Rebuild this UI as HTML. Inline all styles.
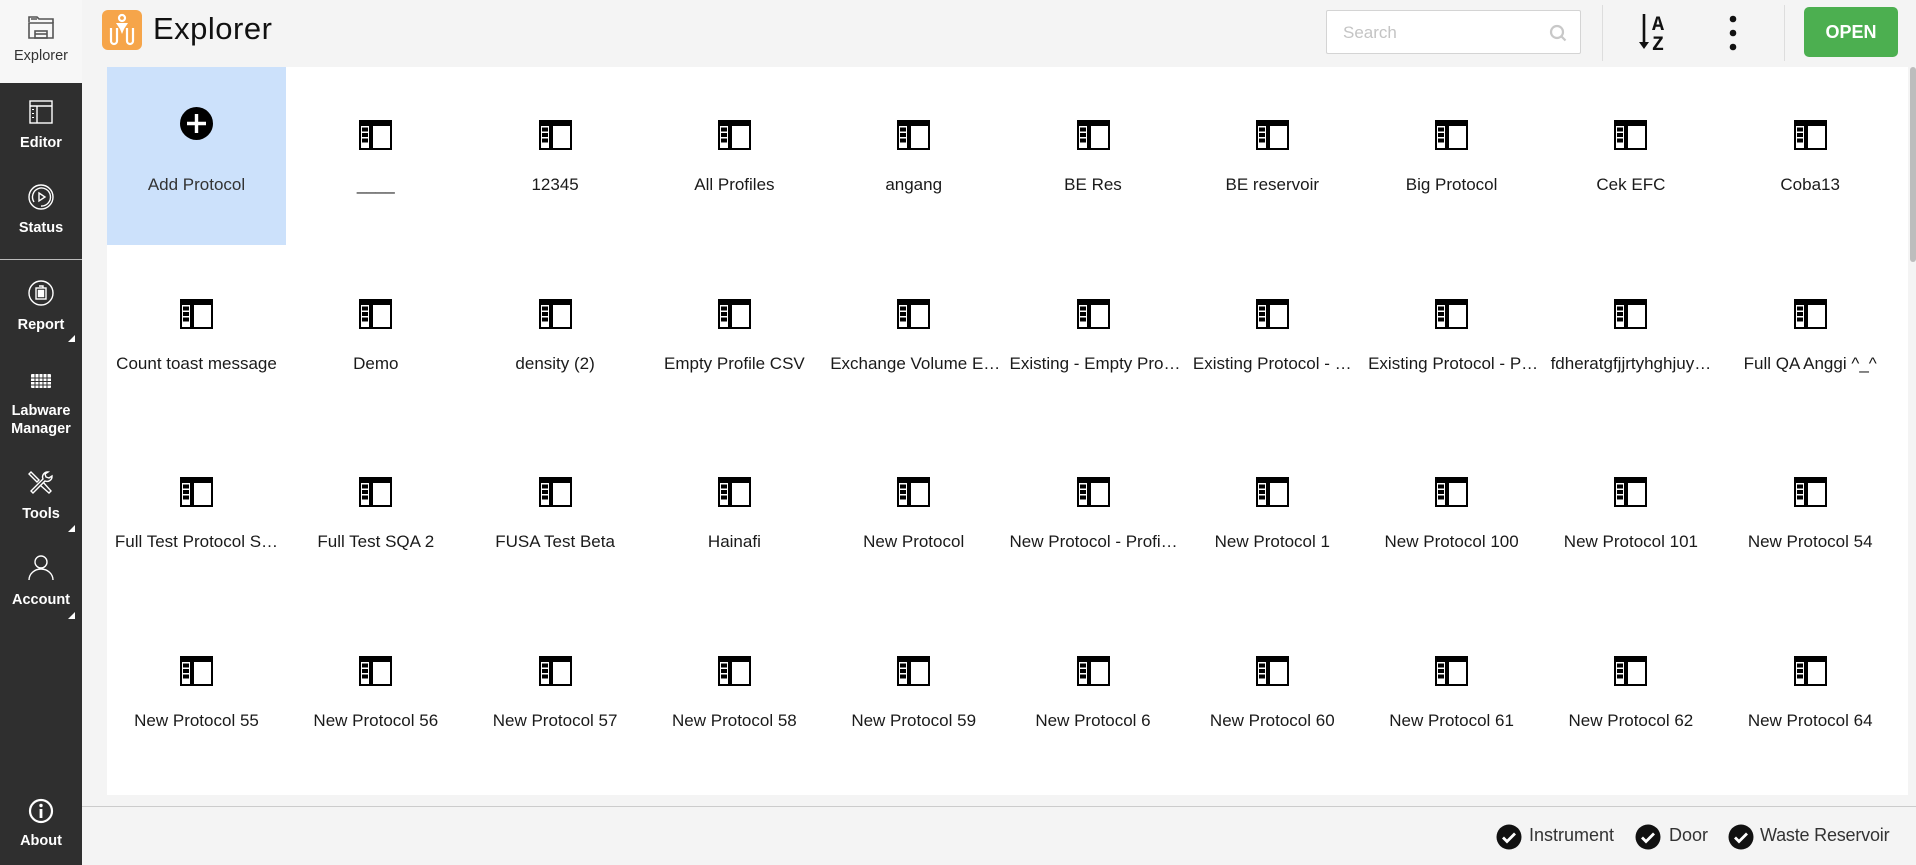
<!DOCTYPE html>
<html><head><meta charset="utf-8"><style>
*{box-sizing:border-box;margin:0;padding:0}
body{width:1916px;height:865px;overflow:hidden;background:#f4f4f4;font-family:"Liberation Sans",Arial,sans-serif;position:relative}
.side{position:absolute;left:0;top:0;width:82px;height:865px;background:#2f2f2f}
.side .top{position:absolute;left:0;top:0;width:82px;height:83px;background:#f7f7f7}
.sl{position:absolute;left:0;width:82px;text-align:center;color:#fff;font-size:14.5px;line-height:18px}
.si{position:absolute;left:26px}
.tri{position:absolute;left:68px;width:0;height:0;border-left:7px solid transparent;border-bottom:7px solid #fff}
.sep{position:absolute;left:0;top:259px;width:82px;height:1px;background:#bbb}
.hdr{position:absolute;left:82px;top:0;right:0;height:67px;background:#f4f4f4}
.grid{position:absolute;left:107px;top:67px;width:1801px;height:728px;background:#fff}
.cell{position:absolute;width:179px;height:178px;text-align:center}
.cell svg{position:absolute;left:73px;top:53px}
.cell .t{position:absolute;left:0;right:0;top:108px;font-size:17px;color:#1a1a1a;white-space:nowrap;overflow:hidden;padding:0 6px}
.foot{position:absolute;left:82px;top:806px;right:0;height:59px;border-top:1px solid #ccc;background:#f4f4f4}
.fi{position:absolute;top:18px;font-size:18px;color:#333}
.ck{position:absolute;top:17px}
</style></head><body>
<div class="side">
 <div class="top"></div>
 <svg class="si" style="top:12px;left:26px" width="30" height="30" viewBox="0 0 30 30" fill="none" stroke="#555" stroke-width="1.6"><path d="M3 10V5h8l2 2h14v4"/><path d="M5 7h6M3 11h24v15H3z"/><rect x="9" y="19" width="12" height="7"/><path d="M9 22h12"/></svg>
 <div class="sl" style="top:47px;color:#333">Explorer</div>
 <svg class="si" style="top:97px" width="30" height="30" viewBox="0 0 30 30" fill="none" stroke="#fff" stroke-width="1.4"><rect x="4" y="4" width="22" height="22"/><path d="M4 9h22M11 9v17"/><path d="M7 12v1M7 16v1M7 20v1" stroke-width="2"/></svg>
 <div class="sl" style="top:134px;font-weight:bold">Editor</div>
 <svg class="si" style="top:182px" width="30" height="30" viewBox="0 0 30 30" fill="none" stroke="#fff" stroke-width="1.4"><circle cx="15" cy="15" r="12"/><path d="M8 20A9 9 0 1 1 15 24"/><path d="M13 11l6 4-6 4z"/></svg>
 <div class="sl" style="top:219px;font-weight:bold">Status</div>
 <div class="sep"></div>
 <svg class="si" style="top:278px" width="30" height="30" viewBox="0 0 30 30" fill="none" stroke="#fff" stroke-width="1.4"><circle cx="15" cy="15" r="12"/><rect x="10" y="10" width="10" height="11"/><rect x="12.5" y="12.5" width="5" height="6" fill="#fff"/><path d="M13 8h4v2"/></svg>
 <div class="sl" style="top:316px;font-weight:bold">Report</div>
 <div class="tri" style="top:335px"></div>
 <svg class="si" style="top:368px" width="30" height="26" viewBox="0 0 30 26" fill="#fff"><rect x="5" y="6" width="20" height="14" rx="1"/><g stroke="#2f2f2f" stroke-width="1"><path d="M5 10h20M5 13.5h20M5 17h20M9 6v14M13 6v14M17 6v14M21 6v14"/></g></svg>
 <div class="sl" style="top:402px;font-weight:bold;line-height:18px">Labware<br>Manager</div>
 <svg class="si" style="top:468px" width="30" height="30" viewBox="0 0 30 30" fill="none" stroke="#fff" stroke-width="1.4"><path d="M5 4l8 8-2 2-8-8zM17 14l8 9-2 2-9-8"/><path d="M22 4a5 5 0 0 0-5 7L5 23l2 2 12-12a5 5 0 0 0 7-5l-3 2-3-1-1-3z"/></svg>
 <div class="sl" style="top:505px;font-weight:bold">Tools</div>
 <div class="tri" style="top:525px"></div>
 <svg class="si" style="top:553px" width="30" height="30" viewBox="0 0 30 30" fill="none" stroke="#fff" stroke-width="1.4"><circle cx="15" cy="9" r="6"/><path d="M3 27a12 11 0 0 1 24 0"/></svg>
 <div class="sl" style="top:591px;font-weight:bold">Account</div>
 <div class="tri" style="top:612px"></div>
 <svg class="si" style="top:796px" width="30" height="30" viewBox="0 0 30 30"><circle cx="15" cy="15" r="11" fill="none" stroke="#fff" stroke-width="2.2"/><rect x="13.6" y="13" width="2.8" height="9" fill="#fff"/><circle cx="15" cy="9.5" r="1.7" fill="#fff"/></svg>
 <div class="sl" style="top:832px;font-weight:bold">About</div>
</div>
<div class="hdr">
 <svg style="position:absolute;left:20px;top:10px" width="40" height="40" viewBox="0 0 40 40"><rect width="40" height="40" rx="6" fill="#f6a54a"/><g fill="none" stroke="#fff" stroke-width="2.2"><path d="M9 18v13a3 3 0 0 0 6 0V18M25 18v13a3 3 0 0 0 6 0V18"/><circle cx="20" cy="8" r="3"/></g><path d="M14 13h12l-4 6h-4z" fill="#fff"/><path d="M18 19h4l-2 5z" fill="#fff"/></svg>
 <div style="position:absolute;left:71px;top:11px;font-size:31px;color:#111;letter-spacing:0.5px">Explorer</div>
 <div style="position:absolute;left:1244px;top:10px;width:255px;height:44px;background:#fff;border:1px solid #d4d4d4;border-radius:2px"><span style="position:absolute;left:16px;top:12px;font-size:17px;color:#c4c4c4">Search</span><svg style="position:absolute;left:222px;top:13px" width="18" height="18" viewBox="0 0 18 18" fill="none" stroke="#c8c8c8" stroke-width="2.2"><circle cx="8" cy="8" r="6"/><path d="M12.5 12.5l4 4"/></svg></div>
 <div style="position:absolute;left:1520px;top:5px;width:1px;height:56px;background:#ddd"></div>
 <svg style="position:absolute;left:1556px;top:12px" width="34" height="40" viewBox="0 0 34 40"><path d="M6 2v32" stroke="#111" stroke-width="2.6"/><path d="M1 30l5 7 5-7z" fill="#111"/><text x="14" y="18" font-family="Liberation Mono,monospace" font-size="20" font-weight="bold" fill="#111">A</text><text x="14" y="38" font-family="Liberation Mono,monospace" font-size="20" font-weight="bold" fill="#111">Z</text></svg>
 <svg style="position:absolute;left:1645px;top:15px" width="12" height="36" viewBox="0 0 12 36" fill="#111"><circle cx="6" cy="4" r="3.3"/><circle cx="6" cy="18" r="3.3"/><circle cx="6" cy="32" r="3.3"/></svg>
 <div style="position:absolute;left:1702px;top:5px;width:1px;height:56px;background:#ddd"></div>
 <div style="position:absolute;left:1722px;top:7px;width:94px;height:50px;background:#4caf50;border-radius:5px;color:#fff;font-size:18px;font-weight:bold;text-align:center;line-height:50px">OPEN</div>
</div>
<div style="position:absolute;left:1908px;top:67px;width:8px;height:739px;background:#f4f4f4"></div>
<div style="position:absolute;left:1910px;top:67px;width:6px;height:195px;background:#bdbdbd;border-radius:3px"></div>
<div class="grid" id="g"></div>
<div class="foot">
 <svg class="ck" style="left:1414px" width="26" height="26" viewBox="0 0 26 26"><circle cx="13" cy="13" r="12.5" fill="#111"/><path d="M7 13.5l4 4 8-8" fill="none" stroke="#fff" stroke-width="2.8"/></svg>
 <div class="fi" style="left:1447px">Instrument</div>
 <svg class="ck" style="left:1553px" width="26" height="26" viewBox="0 0 26 26"><circle cx="13" cy="13" r="12.5" fill="#111"/><path d="M7 13.5l4 4 8-8" fill="none" stroke="#fff" stroke-width="2.8"/></svg>
 <div class="fi" style="left:1587px">Door</div>
 <svg class="ck" style="left:1646px" width="26" height="26" viewBox="0 0 26 26"><circle cx="13" cy="13" r="12.5" fill="#111"/><path d="M7 13.5l4 4 8-8" fill="none" stroke="#fff" stroke-width="2.8"/></svg>
 <div class="fi" style="left:1678px;letter-spacing:-0.2px">Waste Reservoir</div>
</div>
<script>
var L=["Add Protocol","____","12345","All Profiles","angang","BE Res","BE reservoir","Big Protocol","Cek EFC","Coba13",
"Count toast message","Demo","density (2)","Empty Profile CSV","Exchange Volume E…","Existing - Empty Pro…","Existing Protocol - …","Existing Protocol - P…","fdheratgfjjrtyhghjuy…","Full QA Anggi ^_^",
"Full Test Protocol S…","Full Test SQA 2","FUSA Test Beta","Hainafi","New Protocol","New Protocol - Profi…","New Protocol 1","New Protocol 100","New Protocol 101","New Protocol 54",
"New Protocol 55","New Protocol 56","New Protocol 57","New Protocol 58","New Protocol 59","New Protocol 6","New Protocol 60","New Protocol 61","New Protocol 62","New Protocol 64"];
var ic='<svg width="33" height="30" viewBox="0 0 33 30"><rect width="33" height="30" fill="#000"/><rect x="14" y="6" width="17" height="22" fill="#fff"/><rect x="2" y="6" width="10" height="22" fill="#fff"/><rect x="3" y="7.5" width="6" height="4" fill="#000"/><rect x="3" y="13" width="6" height="4" fill="#000"/><rect x="3" y="18.5" width="6" height="4" fill="#000"/><rect x="10" y="6" width="2.5" height="22" fill="#000"/></svg>';
var add='<svg width="33" height="33" viewBox="0 0 33 33" style="left:73px;top:40px"><circle cx="16.5" cy="16.5" r="16.5" fill="#000"/><path d="M16.5 7v19M7 16.5h19" stroke="#fff" stroke-width="3.4"/></svg>';
var h='';
for(var i=0;i<40;i++){var r=Math.floor(i/10),c=i%10;
h+='<div class="cell" style="left:'+(c*179.3)+'px;top:'+(r*178.5)+'px;'+(i==0?'background:#cce1fb;':'')+'">'+(i==0?add:ic)+'<div class="t" style="'+(i==0?'color:#333':'')+'">'+L[i].replace(/&/g,'&amp;')+'</div></div>';}
document.getElementById('g').innerHTML=h;
</script>
</body></html>
